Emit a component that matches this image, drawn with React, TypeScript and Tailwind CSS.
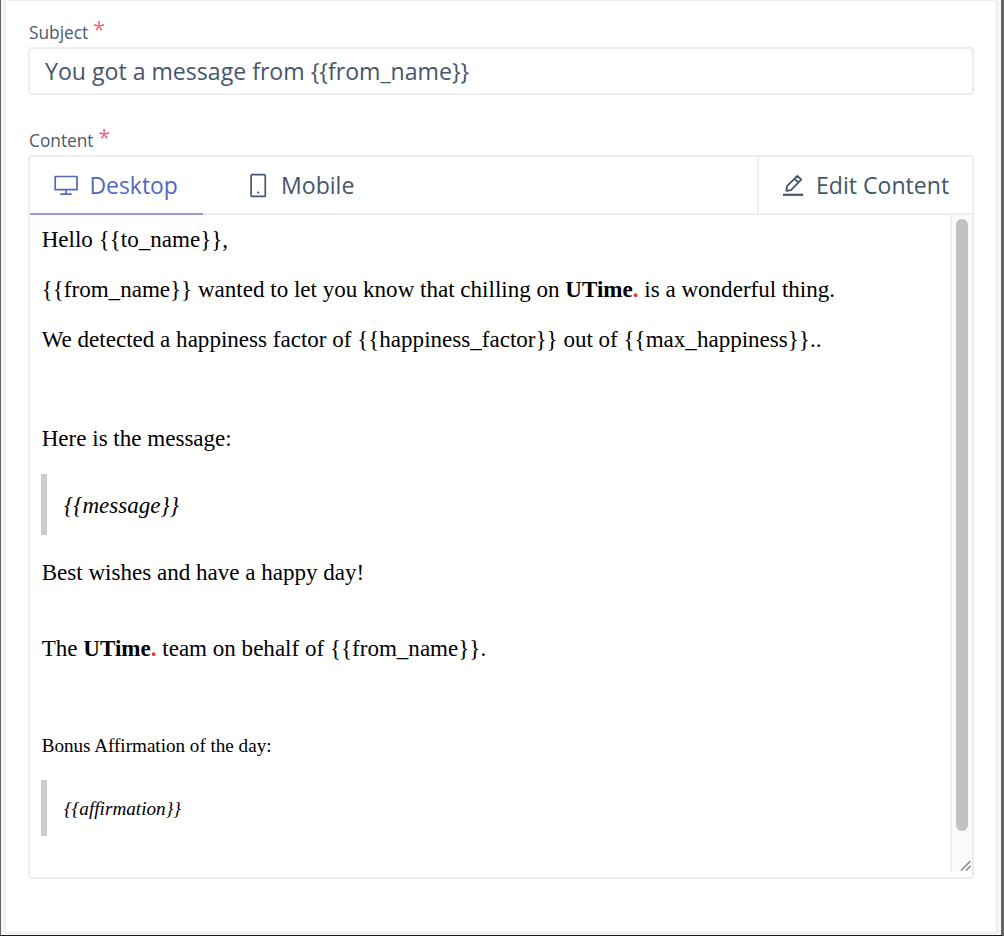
import type { ReactNode } from "react";

function Label({ children }: { children: ReactNode }) {
  return (
    <div className="flex h-[24px] items-center gap-[5px] whitespace-nowrap text-[17.3px] leading-[24px] text-[#4b5a6d]">
      <span className="pt-[2px]">{children}</span>
      <span className="-mt-[7px] text-[21px] text-[#f9617c]">*</span>
    </div>
  );
}

function DesktopIcon() {
  return (
    <svg width="26" height="22" viewBox="0 0 26 22" fill="none" stroke="currentColor" strokeWidth="1.7">
      <path d="M2.2 1.5H24V14.7H2.2ZM13 14.7V18.9M7.3 19.1H18.7" strokeLinejoin="round" />
    </svg>
  );
}

function MobileIcon() {
  return (
    <svg width="18" height="26" viewBox="0 0 18 26" fill="none" stroke="currentColor" strokeWidth="1.7">
      <rect x="2.1" y="1.6" width="14.2" height="21.8" rx="1" />
      <circle cx="9.2" cy="19.5" r="1.1" fill="currentColor" stroke="none" />
    </svg>
  );
}

function EditIcon() {
  return (
    <svg width="22" height="24" viewBox="0 0 22 24" fill="none" stroke="currentColor" strokeWidth="1.8" strokeLinejoin="round">
      <path d="M4.4 16.9L5 12.1L15.4 1.8L19.2 5.7L9 16.1ZM12.6 4.6L16.4 8.5" />
      <path d="M1 20.8H21.2" strokeWidth="2.2" />
    </svg>
  );
}

function Line({ children }: { children?: ReactNode }) {
  return <p className="h-[49.7px] whitespace-nowrap leading-[26px]">{children}</p>;
}

function Brand() {
  return (
    <strong>
      UTime<span className="text-[#e8392c]">.</span>
    </strong>
  );
}

export default function App() {
  return (
    <div className="flex h-[936px] w-[1004px] flex-col overflow-hidden border-r-[3px] border-b border-l border-r-[#666666] border-b-[#1b1b1b] border-l-[#626262] bg-[#f8f8f8] pr-[3px] pb-[1px] pl-[3px] font-['Open_Sans',sans-serif]">
      <div className="flex flex-1 flex-col rounded-[3px] border-2 border-t border-[#ededed] bg-white pt-[19px] pr-[22px] pl-[22px]">
        <div className="pl-[1px]">
          <Label>Subject</Label>
        </div>
        <div className="mt-[3px] flex h-[48px] shrink-0 items-center rounded-[4px] border-2 border-[#ededed] px-[15px] pt-[1px] text-[23.1px] text-[#46566a]">
          <span className="whitespace-nowrap">{"You got a message from {{from_name}}"}</span>
        </div>
        <div className="mt-[33px] pl-[1px]">
          <Label>Content</Label>
        </div>
        <div className="mt-[3px] flex h-[724px] shrink-0 flex-col rounded-[4px] border-2 border-[#ededed]">
          <div className="flex h-[58px] shrink-0 border-b-2 border-[#ededed] text-[23.1px] text-[#46566a]">
            <div className="-mb-[2px] flex w-[173px] items-center border-b-2 border-[#8fa0d4] pt-[2px] pl-[23px] text-[#5269bb]">
              <DesktopIcon />
              <span className="ml-[10.5px] text-[22.9px]">Desktop</span>
            </div>
            <div className="flex flex-1 items-center pt-[2px] pl-[46px]">
              <MobileIcon />
              <span className="ml-[14px] pb-[2px]">Mobile</span>
            </div>
            <div className="flex w-[215px] items-center border-l-2 border-[#ededed] pt-[2px] pl-[23px]">
              <EditIcon />
              <span className="ml-[12px] pb-[2px] whitespace-nowrap">Edit Content</span>
            </div>
          </div>
          <div className="flex h-[657px] shrink-0">
            <div className="flex-1 pt-[11.4px] pl-[11px] font-['Liberation_Serif',serif] text-[23.06px] text-black">
              <div className="pl-[0.7px]">
                <Line>{"Hello {{to_name}},"}</Line>
                <Line>
                  {"{{from_name}} wanted to let you know that chilling on "}
                  <Brand />
                  {" is a wonderful thing."}
                </Line>
                <Line>{"We detected a happiness factor of {{happiness_factor}} out of {{max_happiness}}.."}</Line>
                <Line />
                <Line>Here is the message:</Line>
              </div>
              <blockquote className="-mt-[0.4px] flex h-[61px] items-center border-l-[6px] border-[#cccccc] pl-[17px] italic">
                {"{{message}}"}
              </blockquote>
              <p className="mt-[24px] h-[76px] pl-[0.7px] leading-[26px]">Best wishes and have a happy day!</p>
              <p className="h-[99px] pl-[0.7px] leading-[26px]">
                {"The "}
                <Brand />
                {" team on behalf of {{from_name}}."}
              </p>
              <p className="h-[46px] pl-[0.7px] text-[19.1px] leading-[24px]">Bonus Affirmation of the day:</p>
              <blockquote className="flex h-[56px] items-center border-l-[6px] border-[#cccccc] pt-[2px] pl-[17px] text-[19.2px] italic">
                {"{{affirmation}}"}
              </blockquote>
            </div>
            <div className="flex w-[22px] flex-col justify-between border-l-2 border-[#ededed] bg-[#fafafa] pt-[4px] pl-[4px]">
              <div className="h-[612px] w-[12px] rounded-full bg-[#c1c1c1]" />
              <svg className="ml-[4px]" width="12" height="12" viewBox="0 0 12 12" fill="none" stroke="#858585" strokeWidth="1.5">
                <path d="M1 10.5L10.5 1M6 10.5L10.5 6" />
              </svg>
            </div>
          </div>
        </div>
      </div>
    </div>
  );
}
